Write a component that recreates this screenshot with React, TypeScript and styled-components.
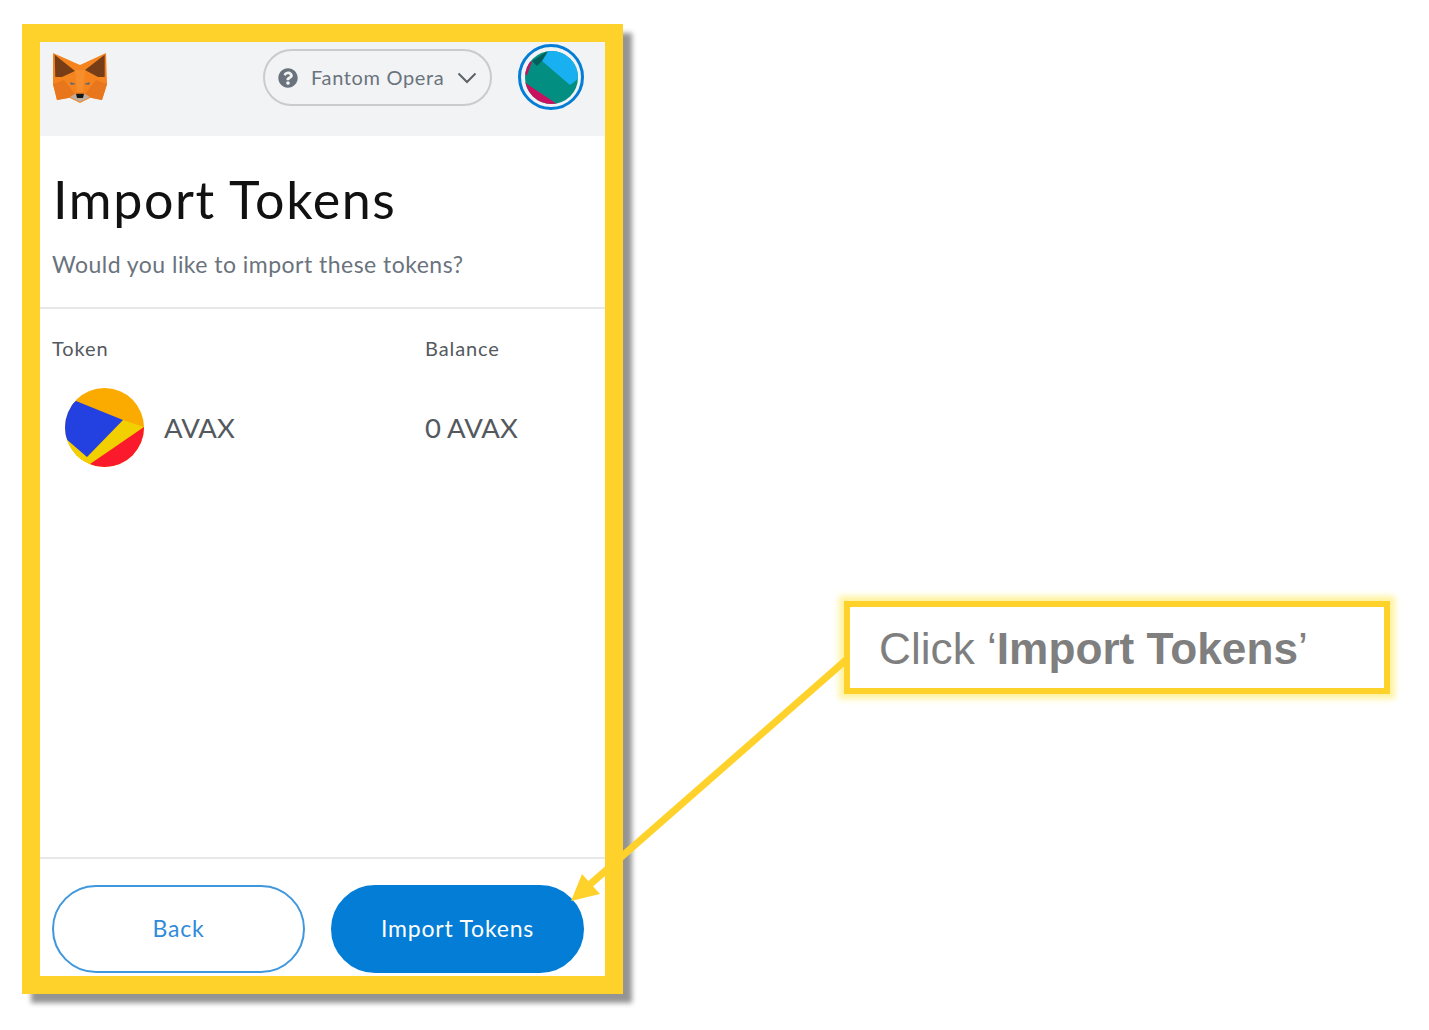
import styled, { createGlobalStyle } from "styled-components";
import { FaQuestionCircle } from "react-icons/fa";

const GlobalStyle = createGlobalStyle`
  html, body {
    margin: 0;
    padding: 0;
    background: #fff;
  }
`;

const FoxLogo = () => (
  <svg width="54" height="52" viewBox="0 0 54 52">
    <polygon points="0,1 27,13 53,1 54,32 49,48 39,46 37,46 27,51 17,46 15,46 4,48 0,32" fill="#f5841f" />
    <polygon points="0,32 11,28 22,42 15,46 4,48" fill="#e8761c" />
    <polygon points="54,32 43,28 32,42 39,46 49,48" fill="#e8761c" />
    <polygon points="22,18 32,18 30,40 24,40" fill="#f68e2c" />
    <polygon points="1.7,2.7 22,19 9,25 2.3,25" fill="#763d16" />
    <polygon points="51.7,2.7 32,18 45,25 51.7,25" fill="#763d16" />
    <polygon points="17,45 22,42 32,42 37,45 27,50" fill="#c0ad9e" />
    <polygon points="23,41.7 31,41.7 30,46 24,46" fill="#161616" />
    <polygon points="17,30 23,32 18,33" fill="#5b6a7a" />
    <polygon points="37,30 31,32 36,33" fill="#5b6a7a" />
  </svg>
);

const AccountArt = () => (
  <svg width="53" height="53" viewBox="0 0 53 53">
    <defs>
      <clipPath id="accountClip">
        <circle cx="26.5" cy="26.5" r="26.5" />
      </clipPath>
    </defs>
    <g clipPath="url(#accountClip)">
      <rect width="53" height="53" fill="#028f82" />
      <polygon points="23,0 53,0 53,28 45,34 17,10" fill="#18b0f0" />
      <polygon points="7,10 23,0 17,10 12,15" fill="#035f5c" />
      <polygon points="0,8 7,11 2,24 0,24" fill="#c8125f" />
      <polygon points="0,31 2,33 32,53 0,53" fill="#c8125f" />
    </g>
  </svg>
);

const AvaxIcon = () => (
  <svg width="79" height="79" viewBox="0 0 79 79">
    <defs>
      <clipPath id="avaxClip">
        <circle cx="39.5" cy="39.5" r="39.5" />
      </clipPath>
    </defs>
    <g clipPath="url(#avaxClip)">
      <rect width="79" height="79" fill="#fbaa00" />
      <polygon points="0,50 22,69 58,32 79,39 26,79 0,79" fill="#f2d000" />
      <polygon points="79,39 25,76 30,79 79,79" fill="#fb1a2c" />
      <polygon points="11,13 58,32 22,69 0,50 0,20" fill="#2340e0" />
    </g>
  </svg>
);

const ChevronIcon = () => (
  <svg width="20" height="12" viewBox="0 0 20 12">
    <polyline points="1.5,1.5 10,10 18.5,1.5" fill="none" stroke="#5b6269" strokeWidth="2" />
  </svg>
);

const App = () => {
  return (
    <Page>
      <GlobalStyle />
      <Frame>
        <Header>
          <FoxLogo />
          <NetworkPill>
            <FaQuestionCircle size={20} color="#6a737d" />
            <NetworkName>Fantom Opera</NetworkName>
            <ChevronIcon />
          </NetworkPill>
          <AccountRing>
            <AccountArt />
          </AccountRing>
        </Header>
        <Intro>
          <Title>Import Tokens</Title>
          <Subtitle>Would you like to import these tokens?</Subtitle>
        </Intro>
        <TokenTable>
          <TokenColumn>
            <ColumnLabel>Token</ColumnLabel>
            <TokenCell>
              <AvaxIcon />
              <TokenText>AVAX</TokenText>
            </TokenCell>
          </TokenColumn>
          <BalanceColumn>
            <ColumnLabel>Balance</ColumnLabel>
            <BalanceCell>
              <TokenText>0 AVAX</TokenText>
            </BalanceCell>
          </BalanceColumn>
        </TokenTable>
        <Footer>
          <BackButton>Back</BackButton>
          <ImportButton>Import Tokens</ImportButton>
        </Footer>
      </Frame>
      <Callout>
        Click ‘<strong>Import Tokens</strong>’
      </Callout>
      <ArrowOverlay width="300" height="270" viewBox="0 0 300 270">
        <line x1="281" y1="20" x2="22" y2="247" stroke="#ffd22b" strokeWidth="7" />
        <polygon points="6,261 17,234 35,254" fill="#ffd22b" />
      </ArrowOverlay>
    </Page>
  );
};

export default App;

const Page = styled.div`
  position: relative;
  width: 1429px;
  height: 1030px;
  overflow: hidden;
  box-sizing: border-box;
  padding: 24px 0 0 22px;
  display: flex;
  align-items: flex-start;
`;

const Frame = styled.div`
  width: 601px;
  height: 970px;
  box-sizing: border-box;
  border: 18px solid #ffd22b;
  background: #fff;
  display: flex;
  flex-direction: column;
  box-shadow: 9px 9px 5px rgba(0, 0, 0, 0.42);
  font-family: "Lato", sans-serif;
`;

const Header = styled.div`
  height: 94px;
  flex: none;
  box-sizing: border-box;
  background: #f2f3f4;
  padding: 10px 21px 0 13px;
  display: flex;
  align-items: flex-start;
`;

const NetworkPill = styled.div`
  margin: -3px 0 0 156px;
  width: 229px;
  height: 57px;
  box-sizing: border-box;
  border: 2px solid #c9cbce;
  border-radius: 29px;
  padding: 0 13px 0 13px;
  display: flex;
  align-items: center;
`;

const NetworkName = styled.span`
  flex: 1;
  margin: 0 0 2px 13px;
  font-size: 20px;
  letter-spacing: 0.65px;
  color: #6a737d;
`;

const AccountRing = styled.div`
  margin: -8px 0 0 26px;
  width: 66px;
  height: 66px;
  box-sizing: border-box;
  border: 3px solid #037dd6;
  border-radius: 50%;
  display: flex;
  align-items: center;
  justify-content: center;
`;

const Intro = styled.div`
  height: 173px;
  flex: none;
  box-sizing: border-box;
  padding: 32px 13px 0;
  border-bottom: 2px solid #e6e8ea;
`;

const Title = styled.h1`
  margin: 0;
  font-size: 52px;
  line-height: 62px;
  font-weight: 400;
  letter-spacing: 1.6px;
  color: #111;
`;

const Subtitle = styled.p`
  margin: 19px 0 0 -1px;
  font-size: 23px;
  line-height: 30px;
  letter-spacing: 0.47px;
  color: #6a737d;
`;

const TokenTable = styled.div`
  flex: 1;
  padding: 26px 12px 0;
  display: flex;
`;

const TokenColumn = styled.div`
  width: 373px;
`;

const BalanceColumn = styled.div`
  flex: 1;
`;

const ColumnLabel = styled.div`
  font-size: 20px;
  line-height: 26px;
  letter-spacing: 0.9px;
  color: #54595e;
`;

const TokenCell = styled.div`
  margin: 27px 0 0 13px;
  display: flex;
  align-items: center;
  gap: 20px;
`;

const BalanceCell = styled.div`
  margin-top: 27px;
  height: 79px;
  display: flex;
  align-items: center;
`;

const TokenText = styled.span`
  font-size: 27.5px;
  color: #54595e;
`;

const Footer = styled.div`
  height: 119px;
  flex: none;
  box-sizing: border-box;
  border-top: 2px solid #e6e8ea;
  padding: 26px 21px 0 12px;
  display: flex;
  gap: 26px;
`;

const BackButton = styled.button`
  flex: 1 1 0;
  min-width: 0;
  height: 88px;
  box-sizing: border-box;
  border: 2px solid #3f97de;
  border-radius: 45px;
  background: #fff;
  color: #2f8bd9;
  font-family: inherit;
  font-size: 23px;
  letter-spacing: 0.8px;
  padding: 0 0 2px;
`;

const ImportButton = styled(BackButton)`
  border-color: #037dd6;
  background: #037dd6;
  color: #fff;
`;

const Callout = styled.div`
  margin: 577px 0 0 221px;
  width: 546px;
  height: 93px;
  box-sizing: border-box;
  border: 6px solid #ffd22b;
  box-shadow: 0 0 6px 5px #fff3a0;
  background: #fff;
  padding: 2px 0 0 29px;
  display: flex;
  align-items: center;
  white-space: pre;
  font-family: "Liberation Sans", sans-serif;
  font-size: 44.2px;
  color: #7f7f7f;

  strong {
    font-weight: 700;
  }
`;

const ArrowOverlay = styled.svg`
  position: absolute;
  left: 565px;
  top: 640px;
`;
